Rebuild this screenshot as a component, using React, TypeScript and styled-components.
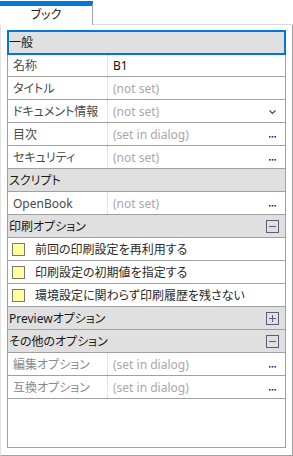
import styled, { createGlobalStyle } from "styled-components";

const GlobalStyle = createGlobalStyle`
  html, body {
    margin: 0;
    padding: 0;
    background: #fff;
  }
  body {
    font-family: "Noto Sans", "Noto Sans CJK JP", sans-serif;
    font-size: 12px;
    font-feature-settings: "palt";
  }
`;

type Row =
  | { kind: "header"; label: string; toggle?: "minus" | "plus"; focused?: boolean }
  | { kind: "prop"; label: string; value: string; unset?: boolean; icon?: "chevron" | "dots"; dim?: boolean }
  | { kind: "check"; label: string };

const rows: Row[] = [
  { kind: "header", label: "一般", focused: true },
  { kind: "prop", label: "名称", value: "B1" },
  { kind: "prop", label: "タイトル", value: "(not set)", unset: true },
  { kind: "prop", label: "ドキュメント情報", value: "(not set)", unset: true, icon: "chevron" },
  { kind: "prop", label: "目次", value: "(set in dialog)", unset: true, icon: "dots" },
  { kind: "prop", label: "セキュリティ", value: "(not set)", unset: true, icon: "dots" },
  { kind: "header", label: "スクリプト" },
  { kind: "prop", label: "OpenBook", value: "(not set)", unset: true, icon: "dots" },
  { kind: "header", label: "印刷オプション", toggle: "minus" },
  { kind: "check", label: "前回の印刷設定を再利用する" },
  { kind: "check", label: "印刷設定の初期値を指定する" },
  { kind: "check", label: "環境設定に関わらず印刷履歴を残さない" },
  { kind: "header", label: "Previewオプション", toggle: "plus" },
  { kind: "header", label: "その他のオプション", toggle: "minus" },
  { kind: "prop", label: "編集オプション", value: "(set in dialog)", unset: true, icon: "dots", dim: true },
  { kind: "prop", label: "互換オプション", value: "(set in dialog)", unset: true, icon: "dots", dim: true },
];

const Root = styled.div`
  width: 293px;
  height: 456px;
  display: flex;
  flex-direction: column;
  box-sizing: border-box;
`;

const TabStrip = styled.div`
  display: flex;
  height: 25px;
  flex-shrink: 0;
`;

const Tab = styled.div`
  width: 93px;
  box-sizing: border-box;
  margin-top: 1px;
  border-top: 5px solid #0078d7;
  border-right: 1px solid #a0a0a0;
  display: flex;
  align-items: center;
  justify-content: center;
  color: #202020;
  font-size: 12px;
  line-height: 1;
  padding-bottom: 1px;
`;

const TabFill = styled.div`
  flex: 1;
  border-bottom: 1px solid #dadada;
`;

const Pane = styled.div`
  flex: 1;
  display: flex;
  box-sizing: border-box;
  border-left: 1px solid #e3e3e3;
  border-right: 1px solid #a0a0a0;
  border-bottom: 1px solid #a0a0a0;
  padding: 5px 6px 7px 6px;
`;

const Grid = styled.div`
  flex: 1;
  border: 1px solid #a0a0a0;
  background: #fff;
  display: flex;
  flex-direction: column;
`;

const HeaderRow = styled.div<{ $focused?: boolean }>`
  height: 22px;
  flex-shrink: 0;
  display: flex;
  align-items: center;
  background: #e0e0e0;
  border-bottom: 1px solid #a0a0a0;
  padding: 0 6px 0 1px;
  color: #1a1a1a;
  outline: ${({ $focused }) => ($focused ? "2px solid #0078d7" : "none")};
  outline-offset: -1px;
  position: relative;
`;

const HeaderText = styled.span`
  flex: 1;
  white-space: nowrap;
`;

const PropRow = styled.div`
  height: 22px;
  flex-shrink: 0;
  display: flex;
  align-items: stretch;
  border-bottom: 1px solid #a0a0a0;
`;

const LabelCell = styled.div<{ $dim?: boolean }>`
  width: 100px;
  flex-shrink: 0;
  display: flex;
  align-items: center;
  padding-left: 5px;
  box-sizing: border-box;
  border-right: 1px dotted #cfcfcf;
  color: ${({ $dim }) => ($dim ? "#8a8a8a" : "#4a4a4a")};
  white-space: nowrap;
  overflow: hidden;
`;

const ValueCell = styled.div<{ $unset?: boolean }>`
  flex: 1;
  display: flex;
  align-items: center;
  padding: 0 6px 0 5px;
  color: ${({ $unset }) => ($unset ? "#a8a8a8" : "#111")};
  white-space: nowrap;
`;

const ValueText = styled.span`
  flex: 1;
`;

const CheckRow = styled.div`
  height: 22px;
  flex-shrink: 0;
  display: flex;
  align-items: center;
  gap: 10px;
  padding-left: 4px;
  border-bottom: 1px solid #a0a0a0;
  color: #2a2a2a;
  white-space: nowrap;
`;

const CheckBox = styled.span`
  width: 11px;
  height: 11px;
  flex-shrink: 0;
  background: #ffff9e;
  border: 1px solid #7a7a6a;
`;

const IconBox = styled.span`
  width: 13px;
  height: 13px;
  display: flex;
  align-items: center;
  justify-content: center;
  flex-shrink: 0;
`;

function ToggleIcon({ kind }: { kind: "minus" | "plus" }) {
  return (
    <IconBox>
      <svg width="13" height="13" viewBox="0 0 13 13">
        <rect x="0.5" y="0.5" width="12" height="12" fill="none" stroke="#5c5c78" />
        <path d="M3 6.5h7" stroke="#5c5c78" />
        {kind === "plus" && <path d="M6.5 3v7" stroke="#5c5c78" />}
      </svg>
    </IconBox>
  );
}

function DotsIcon() {
  return (
    <IconBox>
      <svg width="9" height="13" viewBox="0 0 9 13">
        <rect x="1" y="8" width="1.6" height="1.6" fill="#2a2aa0" />
        <rect x="3.7" y="8" width="1.6" height="1.6" fill="#2a2aa0" />
        <rect x="6.4" y="8" width="1.6" height="1.6" fill="#2a2aa0" />
      </svg>
    </IconBox>
  );
}

function ChevronIcon() {
  return (
    <IconBox>
      <svg width="9" height="13" viewBox="0 0 9 13">
        <path d="M1.5 5.5l3 3 3-3" fill="none" stroke="#3a3aa8" strokeWidth="1.2" />
      </svg>
    </IconBox>
  );
}

function GridRow({ row }: { row: Row }) {
  if (row.kind === "header") {
    return (
      <HeaderRow $focused={row.focused}>
        <HeaderText>{row.label}</HeaderText>
        {row.toggle && <ToggleIcon kind={row.toggle} />}
      </HeaderRow>
    );
  }
  if (row.kind === "check") {
    return (
      <CheckRow>
        <CheckBox />
        {row.label}
      </CheckRow>
    );
  }
  return (
    <PropRow>
      <LabelCell $dim={row.dim}>{row.label}</LabelCell>
      <ValueCell $unset={row.unset}>
        <ValueText>{row.value}</ValueText>
        {row.icon === "chevron" && <ChevronIcon />}
        {row.icon === "dots" && <DotsIcon />}
      </ValueCell>
    </PropRow>
  );
}

export default function App() {
  return (
    <Root>
      <GlobalStyle />
      <TabStrip>
        <Tab>ブック</Tab>
        <TabFill />
      </TabStrip>
      <Pane>
        <Grid>
          {rows.map((row, i) => (
            <GridRow key={i} row={row} />
          ))}
        </Grid>
      </Pane>
    </Root>
  );
}
